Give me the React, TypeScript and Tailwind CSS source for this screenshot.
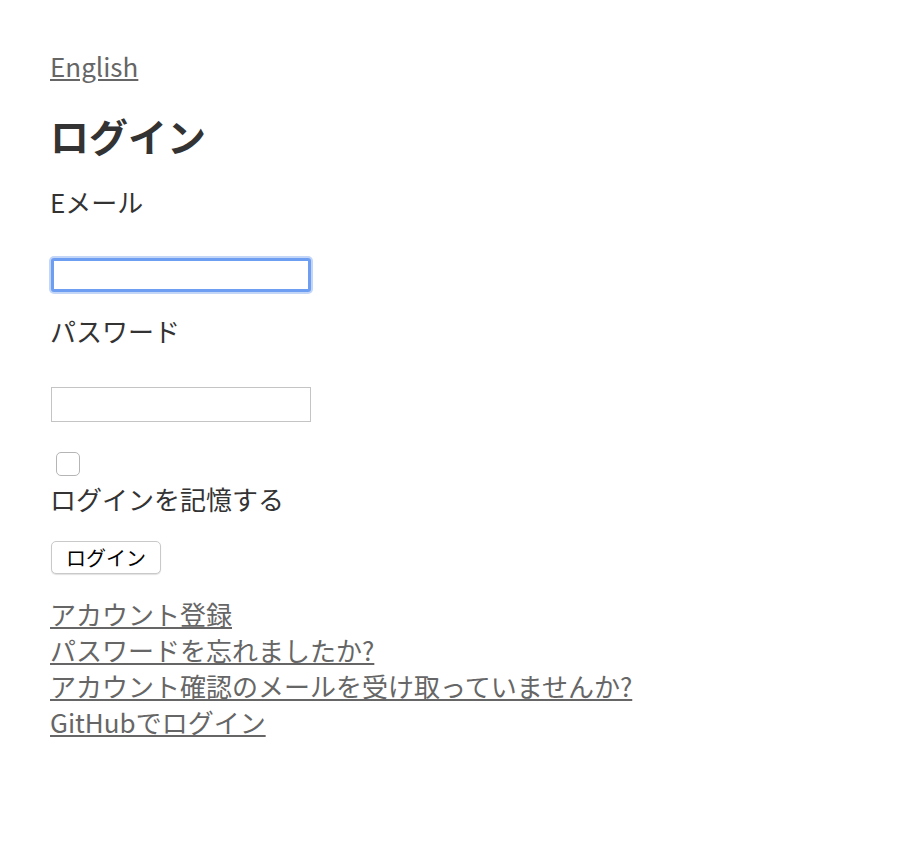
import React, { useState } from 'react'

const font = '[font-family:"Noto_Sans_CJK_JP","Noto_Sans",sans-serif]'

const App: React.FC = () => {
  const [email, setEmail] = useState<string>("")
  const [password, setPassword] = useState<string>("")
  const [remember, setRemember] = useState(false)

  return (
    <div className={`min-h-screen bg-white px-[50px] pt-[48px] text-[#333] ${font}`}>
      <a href="#" className="block w-fit text-[26px] leading-[36px] text-[#666] underline underline-offset-2">
        English
      </a>

      <h1 className="mt-[24px] text-[39px] font-bold leading-[54px] text-[#333]">ログイン</h1>

      <form className="flex flex-col" onSubmit={(e) => e.preventDefault()}>
        <label className="mt-[22px] text-[26px] leading-[36px]">Eメール</label>
        <input
          type="email"
          className="ml-[1px] mt-[38px] h-[34px] w-[260px] rounded-[3px] border-[3px] border-[#6e9ef2] bg-white shadow-[0_0_0_2px_#c3d6f8] outline-none"
          value={email}
          onChange={(e) => setEmail(e.target.value)}
        />

        <label className="mt-[21px] text-[26px] leading-[36px]">パスワード</label>
        <input
          type="password"
          className="ml-[1px] mt-[38px] h-[35px] w-[260px] border border-[#c4c4c4] bg-white outline-none"
          value={password}
          onChange={(e) => setPassword(e.target.value)}
        />

        <input
          type="checkbox"
          className="ml-[6px] mt-[30px] h-[24px] w-[24px] appearance-none rounded-[5px] border border-[#b5b5b5] bg-white"
          checked={remember}
          onChange={(e) => setRemember(e.target.checked)}
        />
        <label className="mt-[5px] text-[26px] leading-[36px]">ログインを記憶する</label>

        <button
          type="submit"
          className="ml-[1px] mt-[24px] h-[33px] w-[110px] rounded-[5px] border border-[#c9c9c9] bg-white text-[20px] leading-none text-black shadow-[0_1px_1px_rgba(0,0,0,0.12)]"
        >
          ログイン
        </button>
      </form>

      <div className="mt-[22px] flex flex-col items-start text-[26px] leading-[36px]">
        <a href="#" className="text-[#666] underline underline-offset-2">アカウント登録</a>
        <a href="#" className="text-[#666] underline underline-offset-2">パスワードを忘れましたか?</a>
        <a href="#" className="text-[#666] underline underline-offset-2">アカウント確認のメールを受け取っていませんか?</a>
        <a href="#" className="text-[#666] underline underline-offset-2">GitHubでログイン</a>
      </div>
    </div>
  )
}

export default App
